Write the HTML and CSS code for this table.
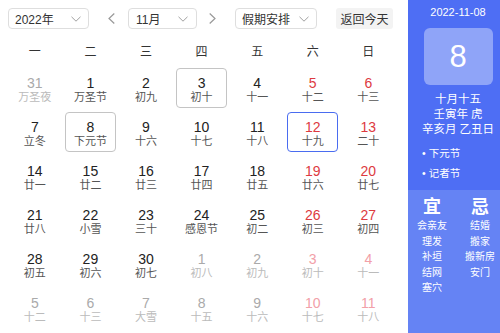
FILE: index.html
```html
<!DOCTYPE html>
<html lang="zh-CN">
<head>
<meta charset="utf-8">
<title>万年历</title>
<link rel="stylesheet" href="styles.css">
</head>
<body>
<div class="page">
  <div class="main">
    <div class="toolbar">
      <div class="select year"><span>2022年</span><svg class="chev" width="10" height="6" viewBox="0 0 10 6"><path d="M0.5 0.8L5 5.2L9.5 0.8" fill="none" stroke="#a0a0a0" stroke-width="1"/></svg></div>
      <span class="arrow prev"><svg width="7" height="11" viewBox="0 0 7 11"><path d="M6.3 0.5L1 5.5L6.3 10.5" fill="none" stroke="#999" stroke-width="1.2"/></svg></span>
      <div class="select month"><span>11月</span><svg class="chev" width="10" height="6" viewBox="0 0 10 6"><path d="M0.5 0.8L5 5.2L9.5 0.8" fill="none" stroke="#a0a0a0" stroke-width="1"/></svg></div>
      <span class="arrow next"><svg width="7" height="11" viewBox="0 0 7 11"><path d="M0.7 0.5L6 5.5L0.7 10.5" fill="none" stroke="#999" stroke-width="1.2"/></svg></span>
      <div class="select holiday"><span>假期安排</span><svg class="chev" width="10" height="6" viewBox="0 0 10 6"><path d="M0.5 0.8L5 5.2L9.5 0.8" fill="none" stroke="#a0a0a0" stroke-width="1"/></svg></div>
      <button class="today-btn">返回今天</button>
    </div>
    <div class="weekdays">
      <span>一</span><span>二</span><span>三</span><span>四</span><span>五</span><span>六</span><span>日</span>
    </div>
    <div class="grid">
      <div class="cell other"><div class="num">31</div><div class="lunar">万圣夜</div></div>
      <div class="cell"><div class="num">1</div><div class="lunar">万圣节</div></div>
      <div class="cell"><div class="num">2</div><div class="lunar">初九</div></div>
      <div class="cell hover"><div class="num">3</div><div class="lunar">初十</div></div>
      <div class="cell"><div class="num">4</div><div class="lunar">十一</div></div>
      <div class="cell red"><div class="num">5</div><div class="lunar">十二</div></div>
      <div class="cell red"><div class="num">6</div><div class="lunar">十三</div></div>

      <div class="cell"><div class="num">7</div><div class="lunar">立冬</div></div>
      <div class="cell hover"><div class="num">8</div><div class="lunar">下元节</div></div>
      <div class="cell"><div class="num">9</div><div class="lunar">十六</div></div>
      <div class="cell"><div class="num">10</div><div class="lunar">十七</div></div>
      <div class="cell"><div class="num">11</div><div class="lunar">十八</div></div>
      <div class="cell red active"><div class="num">12</div><div class="lunar">十九</div></div>
      <div class="cell red"><div class="num">13</div><div class="lunar">二十</div></div>

      <div class="cell"><div class="num">14</div><div class="lunar">廿一</div></div>
      <div class="cell"><div class="num">15</div><div class="lunar">廿二</div></div>
      <div class="cell"><div class="num">16</div><div class="lunar">廿三</div></div>
      <div class="cell"><div class="num">17</div><div class="lunar">廿四</div></div>
      <div class="cell"><div class="num">18</div><div class="lunar">廿五</div></div>
      <div class="cell red"><div class="num">19</div><div class="lunar">廿六</div></div>
      <div class="cell red"><div class="num">20</div><div class="lunar">廿七</div></div>

      <div class="cell"><div class="num">21</div><div class="lunar">廿八</div></div>
      <div class="cell"><div class="num">22</div><div class="lunar">小雪</div></div>
      <div class="cell"><div class="num">23</div><div class="lunar">三十</div></div>
      <div class="cell"><div class="num">24</div><div class="lunar">感恩节</div></div>
      <div class="cell"><div class="num">25</div><div class="lunar">初二</div></div>
      <div class="cell red"><div class="num">26</div><div class="lunar">初三</div></div>
      <div class="cell red"><div class="num">27</div><div class="lunar">初四</div></div>

      <div class="cell"><div class="num">28</div><div class="lunar">初五</div></div>
      <div class="cell"><div class="num">29</div><div class="lunar">初六</div></div>
      <div class="cell"><div class="num">30</div><div class="lunar">初七</div></div>
      <div class="cell other"><div class="num">1</div><div class="lunar">初八</div></div>
      <div class="cell other"><div class="num">2</div><div class="lunar">初九</div></div>
      <div class="cell other red"><div class="num">3</div><div class="lunar">初十</div></div>
      <div class="cell other red"><div class="num">4</div><div class="lunar">十一</div></div>

      <div class="cell other"><div class="num">5</div><div class="lunar">十二</div></div>
      <div class="cell other"><div class="num">6</div><div class="lunar">十三</div></div>
      <div class="cell other"><div class="num">7</div><div class="lunar">大雪</div></div>
      <div class="cell other"><div class="num">8</div><div class="lunar">十五</div></div>
      <div class="cell other"><div class="num">9</div><div class="lunar">十六</div></div>
      <div class="cell other red"><div class="num">10</div><div class="lunar">十七</div></div>
      <div class="cell other red"><div class="num">11</div><div class="lunar">十八</div></div>
    </div>
  </div>
  <div class="side">
    <div class="side-top">
      <div class="side-date">2022-11-08</div>
      <div class="big-day">8</div>
      <div class="lunar-info">十月十五</div>
      <div class="lunar-info">壬寅年 虎</div>
      <div class="lunar-info">辛亥月 乙丑日</div>
      <ul class="fest">
        <li>下元节</li>
        <li>记者节</li>
      </ul>
    </div>
    <div class="side-bottom">
      <div class="yj">
        <div class="yj-title">宜</div>
        <div class="yj-item">会亲友</div>
        <div class="yj-item">理发</div>
        <div class="yj-item">补垣</div>
        <div class="yj-item">结网</div>
        <div class="yj-item">塞穴</div>
      </div>
      <div class="yj">
        <div class="yj-title">忌</div>
        <div class="yj-item">结婚</div>
        <div class="yj-item">搬家</div>
        <div class="yj-item">搬新房</div>
        <div class="yj-item">安门</div>
      </div>
    </div>
  </div>
</div>
</body>
</html>
```

FILE: styles.css
```css
html, body {
  margin: 0;
  padding: 0;
}
body {
  width: 500px;
  height: 333px;
  overflow: hidden;
  background: #fff;
  font-family: "Liberation Sans", "Noto Sans CJK SC", sans-serif;
  color: #222;
}
.page {
  display: flex;
  height: 333px;
}
.main {
  width: 408px;
  flex: none;
}
.toolbar {
  display: flex;
  align-items: center;
  padding: 8px 0 0 8px;
  height: 21px;
}
.select {
  box-sizing: border-box;
  height: 21px;
  border: 1px solid #dedede;
  border-radius: 4px;
  display: flex;
  align-items: center;
  justify-content: space-between;
  padding: 0 7px 0 6px;
  font-size: 12px;
  color: #333;
}
.select.year { width: 81px; }
.select.month { width: 69px; padding-left: 7px; padding-right: 8px; }
.select.holiday { width: 82px; padding-left: 6px; }
.chev { display: block; }
.arrow {
  display: flex;
  align-items: center;
  width: 7px;
  height: 11px;
}
.arrow svg { display: block; }
.arrow.prev { margin: 0 13px 0 19px; }
.arrow.next { margin: 0 19px 0 12px; }
.today-btn {
  margin-left: 19px;
  width: 57px;
  height: 21px;
  box-sizing: border-box;
  border: none;
  border-radius: 3px;
  background: #f3f3f3;
  color: #333;
  font-family: "Liberation Sans", "Noto Sans CJK SC", sans-serif;
  font-size: 12px;
  padding: 0;
}
.weekdays {
  display: grid;
  grid-template-columns: repeat(7, 51px);
  column-gap: 4.6px;
  padding-left: 9.3px;
  margin-top: 13px;
  line-height: 20px;
  font-size: 12px;
  color: #333;
  text-align: center;
}
.grid {
  display: grid;
  grid-template-columns: repeat(7, 51px);
  grid-auto-rows: 40px;
  column-gap: 4.6px;
  row-gap: 4px;
  padding-left: 9.3px;
  margin-top: 6px;
}
.cell {
  box-sizing: border-box;
  border: 1px solid transparent;
  border-radius: 4px;
  text-align: center;
  padding-top: 7px;
}
.cell.hover { border-color: #c4c4c4; }
.cell.active { border-color: #4a6cf0; }
.num {
  font-size: 14px;
  line-height: 14px;
  color: #222;
}
.lunar {
  margin-top: 2px;
  font-size: 11px;
  line-height: 11px;
  color: #555;
}
.cell.red .num { color: #dd3a3f; }
.cell.other .num { color: #aaa; }
.cell.other .lunar { color: #bbb; }
.cell.other.red .num { color: #f2a0a8; }
.side {
  width: 100px;
  flex: none;
  display: flex;
  flex-direction: column;
  color: #fff;
}
.side-top {
  height: 190px;
  background: #4e6ef4;
  text-align: center;
  padding-top: 5px;
  box-sizing: border-box;
}
.side-date {
  font-size: 11px;
  line-height: 14px;
}
.big-day {
  width: 69px;
  height: 57px;
  margin: 9px auto 0;
  border-radius: 6px;
  background: #8fa4f8;
  font-size: 31px;
  line-height: 57px;
}
.lunar-info {
  font-size: 11.5px;
  line-height: 15px;
}
.side-date + .big-day + .lunar-info { margin-top: 7px; }
.fest {
  list-style: none;
  margin: 6px 0 0;
  padding: 0 0 0 14px;
  text-align: left;
  font-size: 10.5px;
  line-height: 20px;
}
.fest li::before {
  content: "•";
  margin-right: 3px;
}
.side-bottom {
  flex: 1;
  background: #6583f4;
  display: flex;
}
.yj {
  width: 48px;
  text-align: center;
}
.yj-title {
  padding-top: 6px;
  font-size: 18px;
  line-height: 22px;
  font-weight: bold;
}
.yj-item {
  font-size: 10px;
  line-height: 15.5px;
}
```
